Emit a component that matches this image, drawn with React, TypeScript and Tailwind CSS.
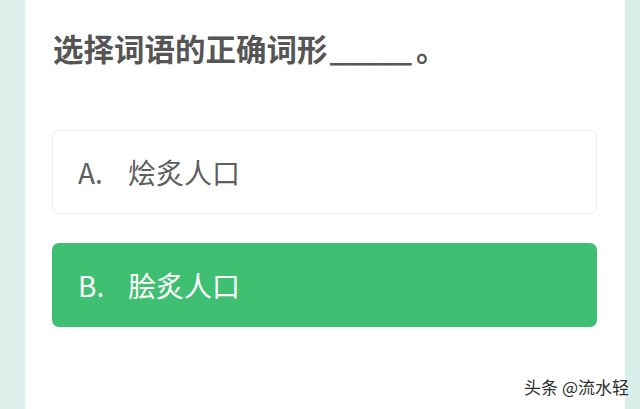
import React from "react";

const font = { fontFamily: '"Noto Sans CJK SC", "Noto Sans", sans-serif' };

export default function App() {
  return (
    <div
      className="w-[640px] h-[409px] overflow-hidden flex bg-[#dcefeb]"
      style={font}
    >
      <div className="w-[25px] shrink-0 bg-[#deefec]" />
      <div className="relative w-[600px] shrink-0 bg-white pl-[27px] pr-[28px] pt-[28px]">
        <div className="text-[30.5px] leading-[40px] font-bold text-[#555555] pl-[1px] whitespace-nowrap">
          选择词语的正确词形
          <span className="tracking-[-1px] ml-[2px]">_____</span>
          <span className="ml-[5px]">。</span>
        </div>
        <div className="mt-[62px] h-[84px] rounded-[7px] border border-[#ececec] bg-white flex items-center pl-[25px] text-[28px] text-[#5e5e5e]">
          <span className="w-[50px]">A.</span>
          <span>烩炙人口</span>
        </div>
        <div className="mt-[29px] h-[84px] rounded-[7px] bg-[#3fbf72] flex items-center pl-[26px] text-[28px] text-white">
          <span className="w-[50px]">B.</span>
          <span>脍炙人口</span>
        </div>
        <div
          className="absolute right-[-4px] bottom-[12px] text-[17px] leading-[20px] text-[#2e2e2e] whitespace-nowrap"
          style={{ textShadow: "0 0 2px #fff, 0 0 2px #fff" }}
        >
          头条 @流水轻
        </div>
      </div>
      <div className="flex-1 bg-[#d8efe9]" />
    </div>
  );
}
